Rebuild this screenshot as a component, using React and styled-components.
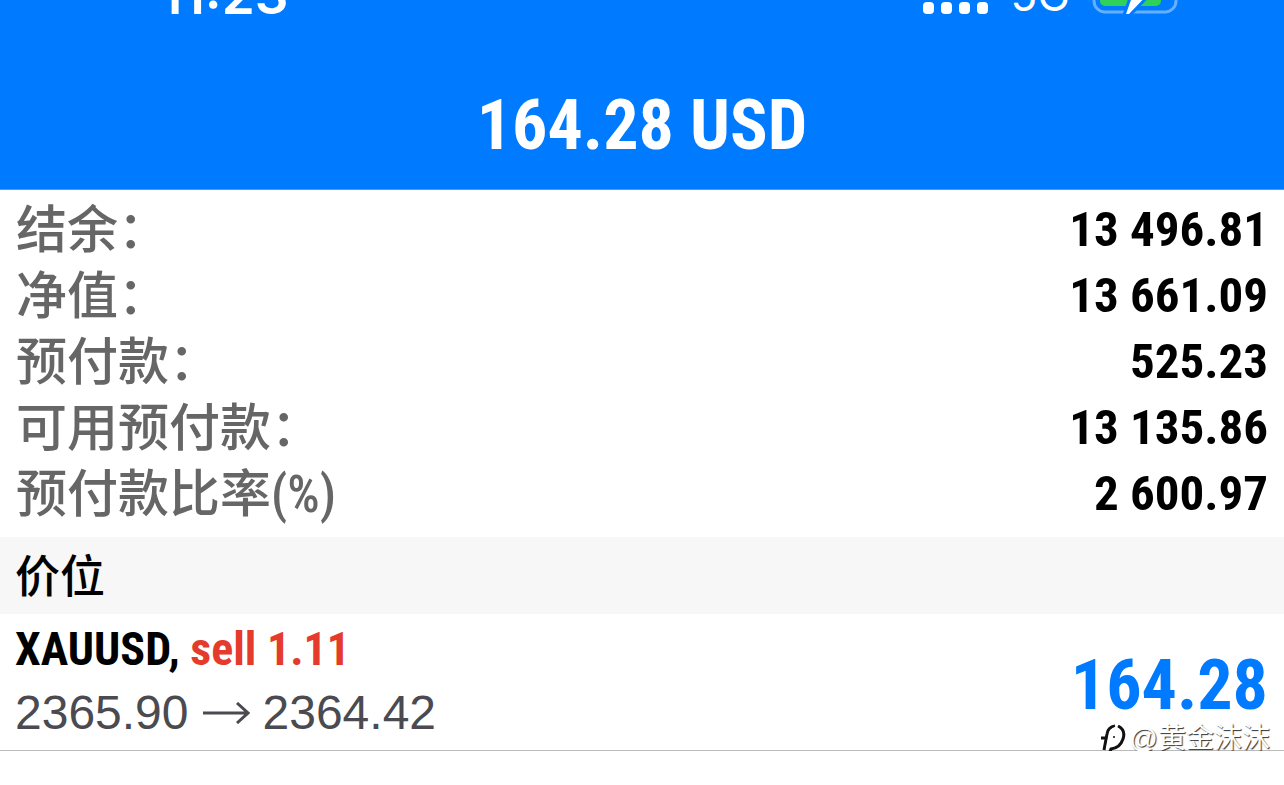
import React from "react";
import styled, { createGlobalStyle } from "styled-components";

const narrow = `"Roboto Condensed", "Liberation Sans Narrow", "Arial Narrow", "Liberation Sans", "Noto Sans CJK SC", sans-serif`;
const regular = `"Liberation Sans", "Noto Sans CJK SC", sans-serif`;

const summary = [
  { id: "balance", label: "结余：", value: "13 496.81" },
  { id: "equity", label: "净值：", value: "13 661.09" },
  { id: "margin", label: "预付款：", value: "525.23" },
  { id: "free", label: "可用预付款：", value: "13 135.86" },
  { id: "level", label: "预付款比率(%)", value: "2 600.97" },
];

const Battery = () => (
  <svg width="92" height="40" viewBox="0 0 92 40" aria-hidden="true">
    <rect x="2" y="1" width="82" height="37" rx="11" fill="none" stroke="#66b0ff" strokeWidth="3" />
    <rect x="8" y="7" width="61" height="25" rx="5" fill="#30d158" />
    <path d="M51 0 L28 23 H40 L34 40 H37 L60 16 H48 L55 0 Z" fill="#fff" stroke="#007aff" strokeWidth="6" />
    <path d="M51 0 L28 23 H40 L34 40 H37 L60 16 H48 L55 0 Z" fill="#fff" />
  </svg>
);

const Signal = () => (
  <svg width="65" height="12" viewBox="0 0 65 12" aria-hidden="true">
    {[0, 18, 36, 54].map((x) => (
      <rect key={x} x={x} width="11" height="12" rx="4" fill="#fff" />
    ))}
  </svg>
);

const Arrow = () => (
  <svg width="48" height="22" viewBox="0 0 48 22" aria-label="to">
    <path d="M1 11 H45 M35 1 L46 11 L35 21" fill="none" stroke="#4a4a50" strokeWidth="3" />
  </svg>
);

const WatermarkLogo = () => (
  <svg width="26" height="32" viewBox="0 0 26 32" aria-hidden="true">
    <g fill="none" stroke="#111">
      <path d="M4 27 L7 11 Q8 4 15 3 M1 15 H7" strokeWidth="3" />
      <path d="M18 3 Q26 7 23 16 Q20 25 11 26 L9 31" strokeWidth="3" />
    </g>
    <path d="M7 26 L10 12 Q11 6 15 5 Q22 6 20 14 Q18 22 11 23" fill="none" stroke="#fff" strokeWidth="2" />
    <circle cx="14" cy="14" r="1" fill="#111" />
  </svg>
);

export default function App() {
  return (
    <>
      <GlobalStyle />
      <Header>
        <StatusBar>
          <Clock>11:23</Clock>
          <StatusIcons>
            <Signal />
            <Network>5G</Network>
            <Battery />
          </StatusIcons>
        </StatusBar>
        <Title>164.28 USD</Title>
      </Header>
      <main>
        <Summary>
          {summary.map((item) => (
            <SummaryRow key={item.id}>
              <dt>{item.label}</dt>
              <dd>{item.value}</dd>
            </SummaryRow>
          ))}
        </Summary>
        <SectionTitle>价位</SectionTitle>
        <Position>
          <div>
            <Symbol>
              XAUUSD, <Side>sell 1.11</Side>
            </Symbol>
            <Prices>
              2365.90 <Arrow /> 2364.42
            </Prices>
          </div>
          <Profit>164.28</Profit>
          <Watermark>
            <WatermarkLogo />
            @黄金沫沫
          </Watermark>
        </Position>
      </main>
    </>
  );
}

const GlobalStyle = createGlobalStyle`
  * {
    box-sizing: border-box;
  }

  body {
    margin: 0;
    background: #fff;
    color: #000;
    font-family: ${narrow};
  }
`;

const Header = styled.header`
  padding-bottom: 24px;
  background: #007aff;
  border-bottom: 1px solid #4f9ae8;
  color: #fff;
  overflow: hidden;
`;

const StatusBar = styled.div`
  display: flex;
  justify-content: space-between;
  align-items: flex-end;
  height: 60px;
  margin-top: -36px;
  padding: 0 100px 10px 160px;
  font-family: Inter, "Liberation Sans", sans-serif;
`;

const Clock = styled.span`
  font-size: 53px;
  line-height: 38px;
  font-weight: 600;
`;

const StatusIcons = styled.div`
  display: flex;
  align-items: flex-end;
  gap: 22px;
`;

const Network = styled.span`
  font-size: 44px;
  line-height: 38px;
  font-weight: 400;
`;

const Title = styled.h1`
  margin: 61px 0 0;
  font-size: 70px;
  line-height: 80px;
  font-weight: 700;
  text-align: center;
`;

const Summary = styled.dl`
  margin: 0;
  padding: 7px 16px 10px;
`;

const SummaryRow = styled.div`
  display: flex;
  justify-content: space-between;
  height: 66px;

  dt {
    color: #666;
    font-size: 51px;
    line-height: 68px;
    font-weight: 500;
  }

  dd {
    margin: 0;
    font-size: 49px;
    line-height: 66px;
    font-weight: 700;
  }
`;

const SectionTitle = styled.h2`
  margin: 0;
  padding: 4px 15px 0;
  background: #f7f7f7;
  font-size: 45px;
  line-height: 73px;
  font-weight: 500;
`;

const Position = styled.section`
  position: relative;
  display: flex;
  justify-content: space-between;
  align-items: center;
  padding: 4px 16px 6px 15px;
  border-bottom: 1px solid #bbb;
`;

const Symbol = styled.div`
  font-size: 46px;
  line-height: 63px;
  font-weight: 700;
`;

const Side = styled.span`
  color: #e53b2c;
`;

const Prices = styled.div`
  display: flex;
  align-items: center;
  gap: 13px;
  color: #4a4a50;
  font-family: ${regular};
  font-size: 48px;
  line-height: 63px;
`;

const Profit = styled.div`
  padding-top: 8px;
  color: #007aff;
  font-size: 70px;
  line-height: 80px;
  font-weight: 700;
`;

/* sits over the divider under the position */
const Watermark = styled.div`
  position: absolute;
  right: 14px;
  bottom: -7px;
  display: flex;
  align-items: center;
  gap: 4px;
  color: #fff;
  font-family: ${regular};
  font-size: 28px;
  line-height: 36px;
  text-shadow: 1px 1px 1px #333;
`;
